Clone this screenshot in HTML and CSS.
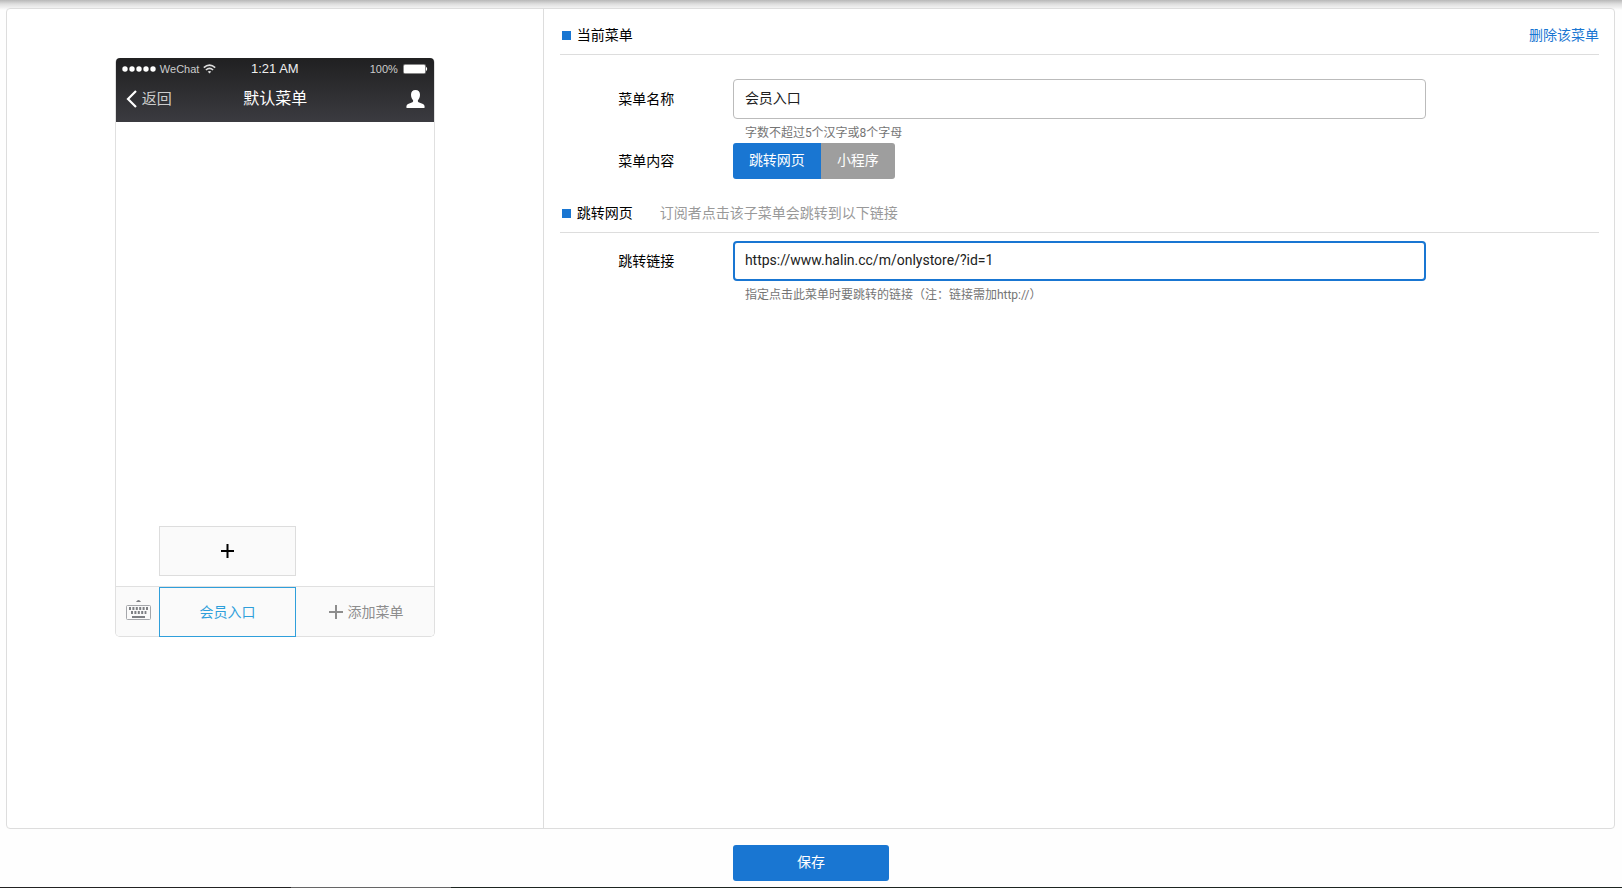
FILE: index.html
```html
<!DOCTYPE html>
<html lang="zh-CN">
<head>
<meta charset="utf-8">
<title>默认菜单</title>
<link rel="stylesheet" href="styles.css">
</head>
<body>
<form class="page">
  <main class="panel">
    <section class="preview">
      <div class="phone">
        <header class="phone-head">
          <div class="status">
            <div class="carrier">
              <svg width="34" height="12" viewBox="0 0 34 12" fill="#fff"><circle cx="3" cy="6" r="2.7"/><circle cx="10" cy="6" r="2.7"/><circle cx="17" cy="6" r="2.7"/><circle cx="24" cy="6" r="2.7"/><circle cx="31" cy="6" r="2.7"/></svg>
              <span>WeChat</span>
              <svg width="13" height="12" viewBox="0 0 13 12" fill="none" stroke="#ddd" stroke-width="1.6"><path d="M.8 4.6Q6.5-.4 12.2 4.6M2.9 7Q6.5 3.8 10.1 7"/><path d="M4.7 8.6Q6.5 7.2 8.3 8.6L6.5 10.6Z" fill="#ddd" stroke="none"/></svg>
            </div>
            <span class="clock">1:21 AM</span>
            <div class="power">
              <span>100%</span>
              <svg width="25" height="10" viewBox="0 0 25 10"><rect x=".5" y=".5" width="22" height="9" rx="1" fill="none" stroke="#888"/><rect x="1" y="1" width="21" height="8" rx=".5" fill="#fff"/><path d="M23 2.800Q25.400 5 23 7.200Z" fill="#fff"/></svg>
            </div>
          </div>
          <div class="nav">
            <div class="back">
              <svg width="11" height="18" viewBox="0 0 11 18" fill="none" stroke="#fff" stroke-width="2.2"><path d="M10 1L2 9L10 17"/></svg>
              <span>返回</span>
            </div>
            <h1 class="nav-title">默认菜单</h1>
            <div class="user">
              <svg width="19" height="18" viewBox="0 0 19 18" fill="#fff"><path d="M9.5 0C12.4 0 14 2 14 4.8C14 7.3 13 9.3 11.9 10.3C11.7 11.7 12.2 12.2 13.2 12.6L17 14.1Q18.5 14.8 18.7 17Q18.7 18 18 18H1Q.3 18 .3 17Q.5 14.8 2 14.1L5.8 12.6C6.8 12.2 7.3 11.7 7.1 10.3C6 9.3 5 7.3 5 4.8C5 2 6.6 0 9.5 0Z"/></svg>
            </div>
          </div>
        </header>
        <div class="phone-body">
          <button type="button" class="add-sub" aria-label="添加子菜单">
            <svg width="13" height="14" viewBox="0 0 13 14" stroke="#000" stroke-width="2"><path d="M0 7H13M6.5 0V14"/></svg>
          </button>
        </div>
        <footer class="menubar">
          <div class="keyboard">
            <svg width="25" height="22" viewBox="0 0 25 22"><path d="M10 3Q12.5-1 15 3Z" fill="#7d7f83"/><rect x=".5" y="6.5" width="24" height="14" rx="1" fill="none" stroke="#a5a7ab"/><path d="M3 9.5H22" stroke="#7d7f83" stroke-width="3" stroke-dasharray="2 1.4"/><path d="M5 13.5H20.400" stroke="#7d7f83" stroke-width="3" stroke-dasharray="2 1.4"/><path d="M6 18H19" stroke="#7d7f83" stroke-width="2"/></svg>
          </div>
          <button type="button" class="menu-item active">会员入口</button>
          <button type="button" class="menu-item">
            <svg width="14" height="14" viewBox="0 0 14 14" stroke="#8d8d8d" stroke-width="2"><path d="M0 7H14M7 0V14"/></svg>
            添加菜单
          </button>
        </footer>
      </div>
    </section>
    <section class="editor">
      <div class="section-head">
        <h2>当前菜单</h2>
        <a class="delete" href="#">删除该菜单</a>
      </div>
      <div class="field first">
        <label for="menu-name">菜单名称</label>
        <input id="menu-name" class="text-box" type="text" value="会员入口">
        <p class="hint">字数不超过5个汉字或8个字母</p>
      </div>
      <div class="field">
        <span class="field-label" id="content-label">菜单内容</span>
        <div class="toggle" role="group" aria-labelledby="content-label">
          <button type="button" class="toggle-item selected">跳转网页</button>
          <button type="button" class="toggle-item">小程序</button>
        </div>
      </div>
      <div class="section-head second">
        <h2>跳转网页</h2>
        <span class="note">订阅者点击该子菜单会跳转到以下链接</span>
      </div>
      <div class="field link">
        <label for="menu-url">跳转链接</label>
        <input id="menu-url" class="text-box focused" type="text" value="https://www.halin.cc/m/onlystore/?id=1">
        <p class="hint">指定点击此菜单时要跳转的链接（注：链接需加http://）</p>
      </div>
    </section>
  </main>
  <div class="actions"><button type="submit" class="save">保存</button></div>
  <div class="base-line"></div>
</form>
</body>
</html>
```
FILE: styles.css
```css
* { box-sizing: border-box; }
body {
  margin: 0;
  background: #fefefe linear-gradient(#b8b8b8, #dedede 4px, #f8f8f8 9px, #fefefe 10px) no-repeat top / 100% 10px;
  color: #000;
  font: 14px/20px Roboto, "Noto Sans CJK SC", sans-serif;
}
h1, h2, p { margin: 0; font-size: 14px; font-weight: 400; }
button, input { font: inherit; margin: 0; }
button { cursor: pointer; }
svg { display: block; flex: none; }
.page { min-height: 100vh; display: flex; flex-direction: column; padding-top: 8px; }
.panel {
  flex: 1;
  display: grid;
  grid-template-columns: 1fr 2fr;
  margin: 0 7px 0 6px;
  border: 1px solid #ddd;
  border-radius: 4px;
  background: #fff;
}
.preview { padding-top: 49px; }
.phone {
  display: flex;
  flex-direction: column;
  width: 320px;
  height: 579px;
  margin: 0 auto;
  border: 1px solid #e0e0e0;
  border-top: 0;
  border-radius: 5px;
}
.phone-head {
  height: 64px;
  padding: 1px 6px 0;
  border-radius: 4px 4px 0 0;
  background: linear-gradient(#202021, #3b3b40);
}
.status, .nav { display: grid; grid-template-columns: 1fr auto 1fr; align-items: center; }
.status { height: 20px; color: #ccc; font: 11px/20px "Liberation Sans", Arial, sans-serif; }
.carrier, .back { display: flex; align-items: center; gap: 4px; }
.clock { color: #eee; font-size: 13px; }
.power { display: flex; align-items: center; justify-content: flex-end; gap: 5px; }
.nav { height: 40px; padding: 0 3px 0 4px; }
.back { gap: 5px; color: #ccc; font-size: 15px; }
.nav-title { color: #fff; font-size: 16px; }
.user { display: flex; justify-content: flex-end; }
.phone-body { flex: 1; display: flex; align-items: flex-end; padding: 0 0 10px 43px; }
.add-sub {
  display: flex;
  align-items: center;
  justify-content: center;
  width: 137px;
  height: 50px;
  padding: 0;
  border: 1px solid #ddd;
  background: #fafafa;
}
.menubar { display: flex; height: 50px; border-top: 1px solid #e0e0e0; border-radius: 0 0 4px 4px; background: #fafafa; }
.keyboard { width: 43px; display: flex; align-items: center; justify-content: center; padding: 0 0 4px 2px; }
.menu-item {
  flex: 1;
  display: flex;
  align-items: center;
  justify-content: center;
  gap: 5px;
  padding: 0;
  border: 0;
  background: none;
  color: #8d8d8d;
}
.menu-item:last-child { padding-left: 2px; }
.menu-item.active { margin-bottom: -1px; border: 1px solid #2f9fdb; color: #2f9fdb; }
.editor { padding: 0 15px 0 16px; border-left: 1px solid #ddd; }
.section-head { display: flex; padding: 16px 0 9px 2px; border-bottom: 1px solid #ddd; }
.section-head.second { margin-top: 8px; }
h2 { display: flex; align-items: center; gap: 6px; }
h2::before { content: ""; width: 9px; height: 9px; background: #1976d2; }
.delete { margin-left: auto; color: #1976d2; text-decoration: none; }
.note { margin-left: 27px; color: #999; }
.field { display: grid; grid-template-columns: 1fr 4fr 1fr; align-items: center; }
.field.first { padding-top: 24px; }
.field.link { padding-top: 8px; }
.field label, .field-label { text-align: center; }
.text-box {
  width: 100%;
  height: 40px;
  padding: 0 11px 4px;
  border: 1px solid #bbb;
  border-radius: 4px;
  background: #fff;
  color: #212121;
  outline: 0;
}
.text-box.focused { padding: 0 10px 2px; border: 2px solid #1976d2; }
.hint { grid-column: 2; padding: 4px 12px 0; color: #757575; font-size: 12px; }
.toggle { display: flex; }
.toggle-item { height: 36px; padding: 0 16px 2px; border: 0; background: #9e9e9e; color: #fff; }
.toggle-item.selected { border-radius: 3px 0 0 3px; background: #1976d2; }
.toggle-item:last-child { border-radius: 0 3px 3px 0; }
.actions { display: flex; justify-content: center; padding: 16px 0 6px; }
.save { width: 156px; height: 36px; padding: 0 0 2px; border: 0; border-radius: 3px; background: #1976d2; color: #fff; }
.base-line { height: 1px; background: linear-gradient(90deg, #222 291px, #666 291px 451px, #1d2520 451px); }
```
